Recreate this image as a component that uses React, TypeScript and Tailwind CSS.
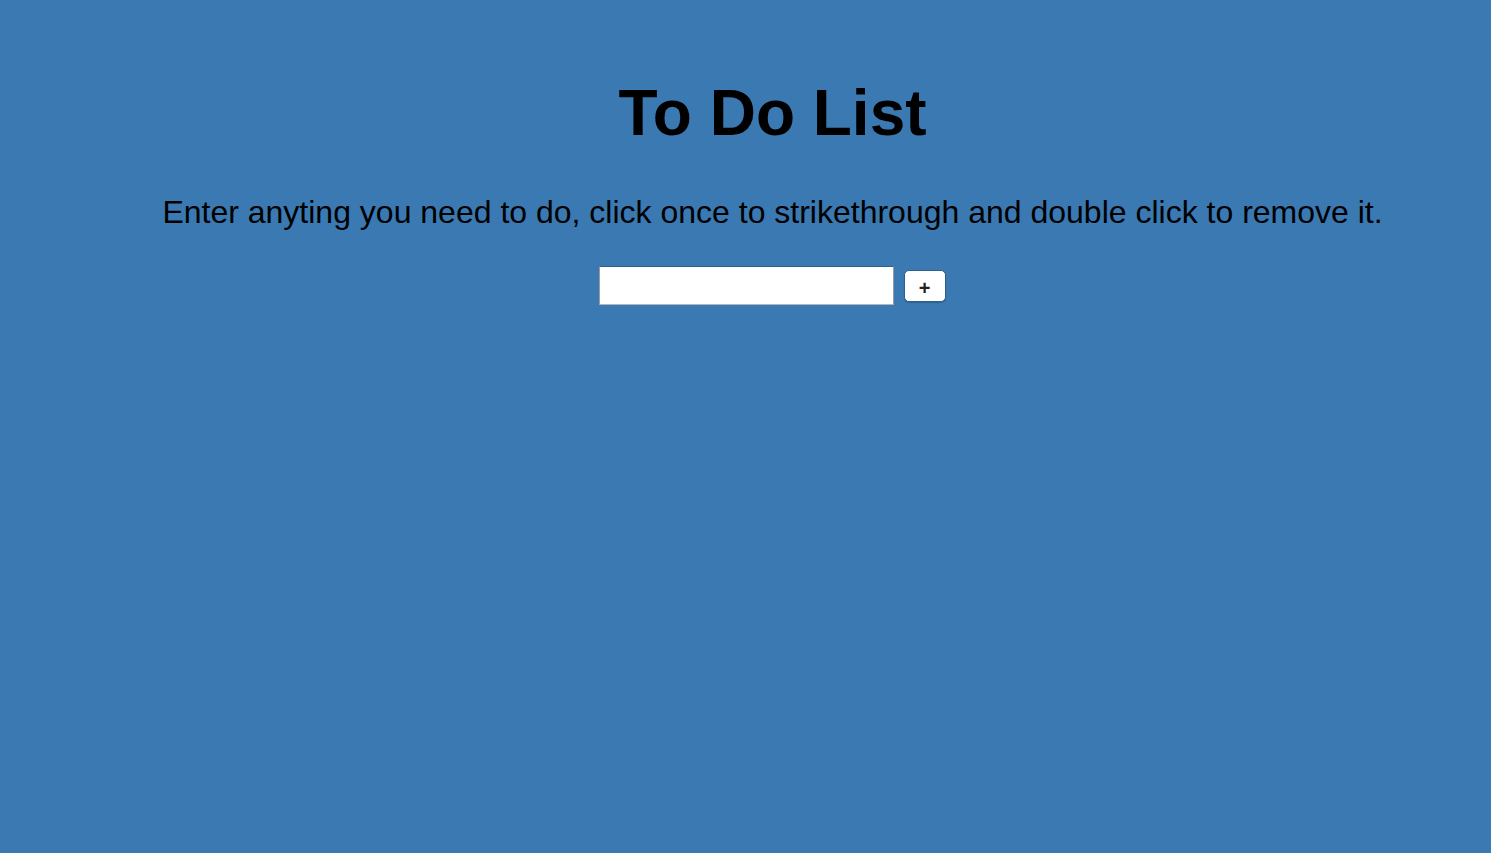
export default function App() {
  return (
    <div className="min-h-[853px] bg-[#3a79b2] pl-[54px] font-['Liberation_Sans',Arial,sans-serif] text-black">
      <div className="flex flex-col items-center pt-[81px]">
        <h1 className="text-[64px] font-bold leading-[64px]">To Do List</h1>
        <p className="mt-[51px] text-[32px] leading-[32px]">
          Enter anyting you need to do, click once to strikethrough and double click to remove it.
        </p>
        <div className="mt-[38px] flex items-center gap-[10px]">
          <input
            type="text"
            className="-ml-px h-[39px] w-[295px] border border-t-[#2f5f8c] border-l-[#9a9a9a] border-r-[#9a9a9a] border-b-[#b5b5b5] bg-white px-1 text-[16px] outline-none"
          />
          <button className="h-[32px] w-[42px] rounded-[5px] border border-[#2e5f8e] bg-white pt-[5px] text-[20px] font-semibold leading-none text-[#222] shadow-[0_1px_1px_rgba(0,0,0,0.2)]">
            +
          </button>
        </div>
      </div>
    </div>
  );
}
